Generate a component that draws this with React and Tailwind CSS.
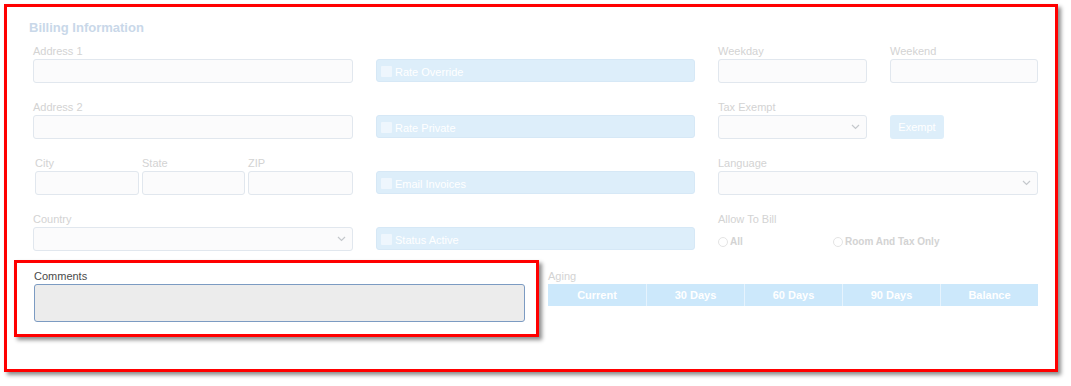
import React from "react";

const font = { fontFamily: '"Liberation Sans", Arial, sans-serif' };

function Label({ children, className = "" }) {
  return (
    <div className={"h-[14px] text-[11px] leading-[14px] text-[#d3d3d3] mb-[1px] " + className}>
      {children}
    </div>
  );
}

function Input({ className = "" }) {
  return (
    <div className={"h-[24px] rounded-[3px] border border-[#e1e7ee] bg-[#fbfbfc] " + className} />
  );
}

function Chevron() {
  return (
    <svg width="9" height="6" viewBox="0 0 9 6" className="text-[#c4c8cc]">
      <path d="M1 1l3.5 3.5L8 1" fill="none" stroke="currentColor" strokeWidth="1.2" />
    </svg>
  );
}

function Select({ className = "" }) {
  return (
    <div className={"h-[24px] rounded-[3px] border border-[#e1e7ee] bg-[#fbfbfc] flex items-center justify-end pr-[6px] " + className}>
      <Chevron />
    </div>
  );
}

function CheckBar({ text }) {
  return (
    <div className="mt-[15px] h-[23px] rounded-[3px] border border-[#d6e8f6] bg-[#ddeefa] flex items-center pl-[4px]">
      <div className="w-[11px] h-[11px] rounded-[1px] bg-[#eef6fd] mr-[3px] mt-[2px]" />
      <span className="text-[11px] text-white mt-[3px]">{text}</span>
    </div>
  );
}

function Radio({ label, className = "" }) {
  return (
    <div className={"flex items-center " + className}>
      <div className="w-[10px] h-[10px] rounded-full border border-[#e4e4e4] bg-white mr-[2px]" />
      <span className="text-[10px] font-bold text-[#d3d3d3]">{label}</span>
    </div>
  );
}

export default function App() {
  return (
    <div className="w-[1071px] h-[386px] bg-white" style={font}>
      <div className="ml-[4px] pt-[4px]">
        <div className="w-[1054px] h-[368px] border-[3px] border-[#ff0000] bg-white shadow-[3px_3px_4px_rgba(0,0,0,0.45)]">
          <div className="pl-[22px] pt-[13px] h-[16px] box-content text-[13px] leading-[16px] font-bold text-[#c9d8e9]">
            Billing Information
          </div>
          <div className="mt-[8px] ml-[26px] grid grid-cols-[320px_319px_320px] gap-x-[23px] gap-y-[17px]">
            {/* Row 1 */}
            <div>
              <Label>Address 1</Label>
              <Input />
            </div>
            <CheckBar text="Rate Override" />
            <div className="flex gap-[23px]">
              <div className="w-[149px]">
                <Label>Weekday</Label>
                <Input />
              </div>
              <div className="w-[148px]">
                <Label>Weekend</Label>
                <Input />
              </div>
            </div>

            {/* Row 2 */}
            <div>
              <Label>Address 2</Label>
              <Input />
            </div>
            <CheckBar text="Rate Private" />
            <div className="flex gap-[23px]">
              <div className="w-[149px]">
                <Label>Tax Exempt</Label>
                <Select />
              </div>
              <div className="pt-[15px]">
                <div className="w-[54px] h-[24px] rounded-[3px] bg-[#ddeefa] flex items-center justify-center text-[11px] text-white">
                  Exempt
                </div>
              </div>
            </div>

            {/* Row 3 */}
            <div className="flex gap-[3px] pl-[2px]">
              <div className="w-[104px]">
                <Label>City</Label>
                <Input />
              </div>
              <div className="w-[103px]">
                <Label>State</Label>
                <Input />
              </div>
              <div className="w-[105px]">
                <Label>ZIP</Label>
                <Input />
              </div>
            </div>
            <CheckBar text="Email Invoices" />
            <div>
              <Label>Language</Label>
              <Select />
            </div>

            {/* Row 4 */}
            <div>
              <Label>Country</Label>
              <Select />
            </div>
            <CheckBar text="Status Active" />
            <div>
              <Label>Allow To Bill</Label>
              <div className="flex mt-[8px]">
                <Radio label="All" className="w-[115px]" />
                <Radio label="Room And Tax Only" />
              </div>
            </div>
          </div>

          {/* Bottom row */}
          <div className="flex mt-[9px] ml-[7px]">
            <div className="w-[525px] h-[77px] border-[3px] border-[#ff0000] bg-white shadow-[3px_3px_4px_rgba(0,0,0,0.45)] pl-[17px] pr-[11px] pt-[6px]">
              <div className="h-[14px] text-[11px] leading-[14px] text-[#4a4a4a] mb-[1px]">Comments</div>
              <div className="h-[38px] rounded-[3px] border border-[#7c9bc2] bg-[#ececec]" />
            </div>
            <div className="ml-[9px] w-[490px] pt-[9px]">
              <div className="h-[14px] text-[11px] leading-[14px] text-[#d3d3d3] mb-[1px]">Aging</div>
              <div className="grid grid-cols-5 h-[22px] bg-[#cce8fb]">
                {["Current", "30 Days", "60 Days", "90 Days", "Balance"].map((t, i) => (
                  <div
                    key={t}
                    className={
                      "flex items-center justify-center text-[11px] font-bold text-white " +
                      (i > 0 ? "border-l border-[#e6f3fd]" : "")
                    }
                  >
                    {t}
                  </div>
                ))}
              </div>
            </div>
          </div>
        </div>
      </div>
    </div>
  );
}
